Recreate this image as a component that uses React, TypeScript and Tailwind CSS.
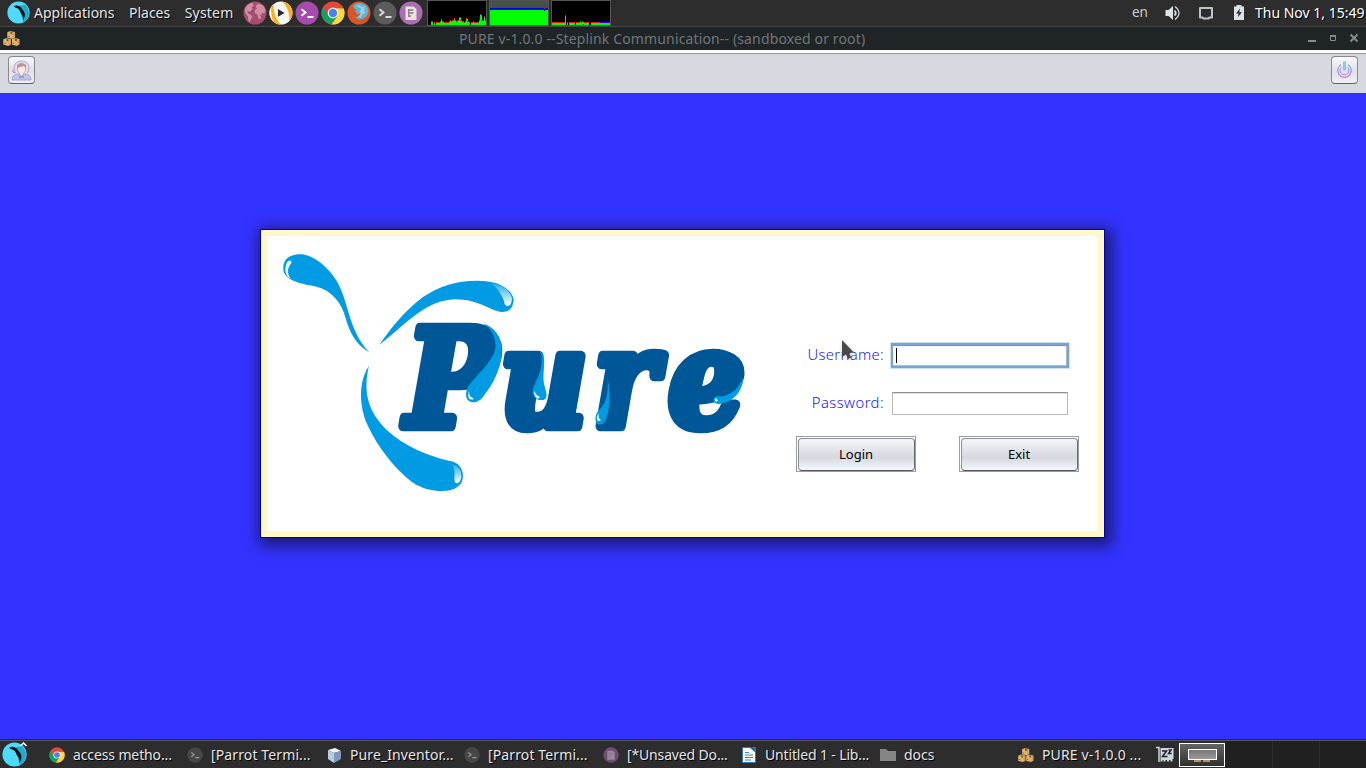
import type { ReactNode } from "react";

const ui = "font-['Noto_Sans',sans-serif]";

function Chrome({ size }: { size: number }) {
  return (
    <svg width={size} height={size} viewBox="0 0 24 24" className="shrink-0">
      <circle cx="12" cy="12" r="11.5" fill="#e0483e" />
      <path d="M2 6.3A11.5 11.5 0 0 0 10.5 23.4L16.5 14.5L12 12L6.8 14.3Z" fill="#12a35f" />
      <path d="M10.5 23.4A11.5 11.5 0 0 0 22.6 7.5L12 7.2L17 14.4Z" fill="#ffd83f" />
      <circle cx="12" cy="12" r="5.4" fill="#f3f3f3" />
      <circle cx="12" cy="12" r="4.2" fill="#4684ec" />
    </svg>
  );
}

function Terminal({ size, bg, fg }: { size: number; bg: string; fg: string }) {
  return (
    <svg width={size} height={size} viewBox="0 0 24 24" className="shrink-0">
      <circle cx="12" cy="12" r="11.5" fill={bg} />
      <path d="M6.5 8.2L10.5 11.5L6.5 14.8M12.5 16H18.5" fill="none" stroke={fg} strokeWidth="1.9" />
    </svg>
  );
}

function Parrot({ size }: { size: number }) {
  return (
    <svg width={size} height={size} viewBox="0 0 24 24" className="shrink-0">
      <circle cx="12" cy="12" r="11.6" fill="#4fd9fb" />
      <path d="M13 5L19 3.8A11.6 11.6 0 0 1 17 22.5Z" fill="#24a9cc" />
      <path d="M7 5.6C10 3.6 13.6 5 15.4 8C17.2 10 19.2 12.6 18.6 15.2C18.6 17 17.6 17.8 16.8 20.5C16.9 17.6 16.6 16.4 15.6 14.4C13.6 12.6 14 10.4 11.8 8.2C10.4 7 8.7 7.6 7 5.6Z" fill="#0b1115" />
    </svg>
  );
}

function Doc({ size, bg, fg }: { size: number; bg: string; fg: string }) {
  return (
    <svg width={size} height={size} viewBox="0 0 24 24" className="shrink-0">
      <circle cx="12" cy="12" r="11.5" fill={bg} />
      <path d="M6.5 5.5H14.5L17.5 8V19H6.5Z" fill={fg} />
      <path d="M9 9H14.5M9 12H14.5M9 15H12" stroke="#8b7a80" strokeWidth="1.6" />
      <path d="M9.7 8.5V16" stroke="#8b7a80" strokeWidth="1.2" />
    </svg>
  );
}

function Globe() {
  return (
    <svg width="24" height="24" viewBox="0 0 24 24" className="shrink-0">
      <circle cx="12" cy="12" r="11.5" fill="#a44d70" />
      <path d="M1.8 8C3.5 4.5 6 2.2 9.5 2L10.8 4L8.7 6.5L9.5 8.5L6.5 10.8L4.5 10L5 12.5L8 14L9.5 16L7.5 18.5L7 21.5L5.2 19L5 15.5L2.6 12.4ZM12.5 5.2L15.5 2.5L20.5 5L22.5 9L21.3 13L19.5 11.5L18 14.5L16.5 11.5L18.2 17L15.8 18.5L14.5 13.5L12 12.4L11.7 9L14 7.5Z" fill="#cf8fa3" />
    </svg>
  );
}

function Player() {
  return (
    <svg width="24" height="24" viewBox="0 0 24 24" className="shrink-0">
      <circle cx="12" cy="12" r="11.5" fill="#f5f5f4" />
      <path d="M4.6 3.2A11.5 11.5 0 0 0 11.5 23.5C7 18 4.2 11 4.6 3.2Z" fill="#ffad18" />
      <path d="M13 .6A11.5 11.5 0 0 1 20.6 19.6C20.5 12 18 5 13 .6Z" fill="#ffad18" />
      <path d="M2.2 6A11.5 11.5 0 0 0 4.6 20.8C2.6 16 1.8 11 2.2 6Z" fill="#f5f5f4" />
      <path d="M9 8L15.5 11.9L9 15.7Z" fill="#282828" />
    </svg>
  );
}

function Firefox() {
  return (
    <svg width="24" height="24" viewBox="0 0 24 24" className="shrink-0">
      <circle cx="12" cy="12" r="11.5" fill="#dc5529" />
      <path d="M6 4.5C10 .8 17 1.3 20.2 5.5C22.5 9 21.4 14 18.2 16.5C14.6 19.2 10 18.7 8 16.3L12 15.4L14.2 12.8L10.5 13L8 10.5L9 8.3L7 7.5Z" fill="#5fb2d4" />
      <path d="M9 5L12.5 4L15.5 6L18.5 5.2L17 9L18.7 12L15.5 13.2L13.5 17L11 16L14 12L12 10.5L14.5 8Z" fill="#9edbe9" opacity=".8" />
    </svg>
  );
}

function Boxes({ size }: { size: number }) {
  return (
    <svg width={size} height={size} viewBox="0 0 17 17" className="shrink-0">
      {["translate(4.5 1)", "translate(.5 8)", "translate(9 8)"].map((t) => (
        <g key={t} transform={t}>
          <path d="M0 1.3L2.5 0L7.5 1V6.5L5.3 7.8L0 6.8Z" fill="#d2a45c" />
          <path d="M0 1.3L5.3 2.2V7.8L0 6.8Z" fill="#e0b76e" />
          <path d="M3 .7L4.8 1.2V3.4L3 3.1Z" fill="#775a32" />
          <path d="M.7 5.2L2.2 5.5" stroke="#765c38" strokeWidth=".9" />
        </g>
      ))}
    </svg>
  );
}

const cpu = [0,0,0,2,0,1,0,1,1,1,2,4,2,2,1,1,1,1,2,3,2,3,5,3,2,3,3,6,3,2,2,1,2,5,2,1,0,1,1,2,1,1,1,1,3,9,3,3,7,3];
const net = [1,1,1,1,1,1,1,1,1,1,1,8,0,1,0,1,1,1,1,1,0,1,1,1,2,1,2,0,1,1,1,1,0,0,1,1,1,1,1,1,1,1,1,1,1,1,1,1,1,1];

function Graph({ data, spike }: { data: number[]; spike: string }) {
  return (
    <svg width="60" height="26" viewBox="0 0 60 26" shapeRendering="crispEdges" className="shrink-0">
      <rect x=".5" y=".5" width="59" height="25" fill="#000" stroke="#555" />
      {data.map((v, i) => (
        <g key={i}>
          <rect x={1 + i * 1.16} y={24 - v} width="1.4" height={v + 1} fill={v > 0 ? "#0f0" : "#000"} />
          {v > 0 && <rect x={1 + i * 1.16} y={23 - v} width="1.2" height="1" fill={i > 40 ? spike : "#e61616"} />}
        </g>
      ))}
    </svg>
  );
}

function Task({ width, children, label, tracking = "" }: { width: string; children: ReactNode; label: string; tracking?: string }) {
  return (
    <div className={`flex shrink-0 items-center gap-[8px] whitespace-nowrap ${width}`}>
      {children}
      <span className={`[text-shadow:1px_1px_0_#000] ${tracking}`}>{label}</span>
    </div>
  );
}

function TopPanel() {
  return (
    <header className="flex h-[27px] items-center border-b border-[#484848] bg-[#2d2d2d] pb-px pl-[7px] text-[14px] text-[#e6e6e6]">
      <Parrot size={23} />
      <nav className="ml-[4px] flex w-[209px] gap-[14.5px] [text-shadow:1px_1px_0_#000]">
        <span>Applications</span>
        <span>Places</span>
        <span className="tracking-[0.2px]">System</span>
      </nav>
      <div className="flex gap-[2px]">
        <Globe />
        <Player />
        <Terminal size={24} bg="#a64bad" fg="#fff" />
        <Chrome size={24} />
        <Firefox />
        <Terminal size={24} bg="#5b5b5b" fg="#ddd" />
        <Doc size={24} bg="#a96fb2" fg="#e9e3dc" />
      </div>
      <div className="ml-[4px] flex gap-[2px]">
        <Graph data={cpu} spike="#775555" />
        <svg width="60" height="26" viewBox="0 0 60 26" shapeRendering="crispEdges">
          <rect x=".5" y=".5" width="59" height="25" fill="#465149" stroke="#555" />
          <path d="M1 7.5H59" stroke="#c01818" />
          <path d="M1 9H59" stroke="#00f" strokeWidth="2" />
          <path d="M1 10H59V25H1Z" fill="#0f0" />
          <path d="M55.5 8V11" stroke="#00f" />
          <path d="M55.5 7V9" stroke="#c01818" />
        </svg>
        <Graph data={net} spike="#2800ff" />
      </div>
      <div className="ml-auto flex items-center">
        <span className="w-[33px] text-[13.5px] text-[#c9cdd2]">en</span>
        <svg width="16" height="16" viewBox="0 0 16 16" className="mr-[17px]">
          <path d="M.5 5H3.5L8 1V15L3.5 11H.5Z" fill="#dce1ea" />
          <path d="M9.5 5.5Q12 8 9.5 10.5" fill="none" stroke="#dce1ea" strokeWidth="1.7" />
          <path d="M10 1.5Q18 8 10 14.5" fill="none" stroke="#dce1ea" strokeWidth="1.2" />
        </svg>
        <svg width="16" height="16" viewBox="0 0 16 16" className="mr-[20px]">
          <path d="M2 3H14V12.5H11.5L10.5 13.5H5.5L4.5 12.5H2Z" fill="none" stroke="#bfc3ca" strokeWidth="2" strokeLinejoin="round" />
        </svg>
        <svg width="10" height="15" viewBox="0 0 10 15" className="mr-[11px]">
          <path d="M0 1.5H2.5V0H7.5V1.5H10V15H0Z" fill="#dce1ea" />
          <path d="M6 3.5L2 8.5H4.5L4 12L8 7.3H5.3Z" fill="#2d2d2d" />
        </svg>
        <span className="w-[111px] whitespace-nowrap text-white [text-shadow:1px_1px_0_#000]">Thu Nov 1, 15:49</span>
      </div>
    </header>
  );
}

function TitleBar() {
  return (
    <div className="grid h-[23px] grid-cols-[459px_1fr_58px] items-center bg-[#1f2427]">
      <div className="pl-[3px]"><Boxes size={17} /></div>
      <h1 className="whitespace-nowrap text-[14px] leading-[23px] tracking-[0.14px] text-[#70777a]">PURE v-1.0.0 --Steplink Communication-- (sandboxed or root)</h1>
      <svg width="58" height="23" viewBox="0 0 58 23" fill="none" stroke="#858b8a">
        <path d="M0 14H8" strokeWidth="2" />
        <path d="M22.5 8.5H27.5V13.5H22.5Z" />
        <path d="M22 9H28" strokeWidth="2" />
        <path d="M42.5 7.5L49.5 14.5M49.5 7.5L42.5 14.5" strokeWidth="2" />
      </svg>
    </div>
  );
}

function ToolButton({ children }: { children: ReactNode }) {
  return (
    <button className="flex h-[28px] w-[27px] items-center justify-center rounded-[4px] border border-[#85888e] border-b-[#5d6066] bg-linear-to-b from-[#fafafc] via-[#dfe1e6] to-[#eef0f6]">
      {children}
    </button>
  );
}

function Toolbar() {
  return (
    <div className="flex h-[43px] items-start justify-between border-t-[3px] border-[#fbfbfc] bg-[#d6d9e0] pr-[8px] pl-[8px] shadow-[inset_0_1px_0_#9498a0]">
      <div className="pt-[3px]">
        <ToolButton>
          <svg width="21" height="21" viewBox="0 0 21 21">
            <path d="M4.5 13C.8 6 4.8 1 10.5 1S20 6 16.5 13" fill="#e4deed" stroke="#b8a0c8" />
            <path d="M1 20Q1 14.5 7 14L10.5 16L14 14Q20 14.5 20 20Z" fill="#bcc7e8" stroke="#a4a7d4" />
            <path d="M6.5 7Q7 4 10.5 4T14.5 7V10.5L12.2 14V15L10.5 16L8.8 15V14L6.5 10.5Z" fill="#f9e9df" stroke="#bc8fae" strokeWidth=".7" />
            <path d="M6 8V5Q10.5 1 15 5V8L12.5 6Q9 7 6 8Z" fill="#bd919f" />
            <path d="M8 17H13" stroke="#8796c0" strokeWidth="1.5" />
            <path d="M2 10V12L4 13" stroke="#a38ab9" fill="none" />
          </svg>
        </ToolButton>
      </div>
      <div className="pt-[3px]">
        <ToolButton>
          <svg width="17" height="18" viewBox="0 0 17 18" fill="none">
            <defs>
              <linearGradient id="power" x1="0" y1="0" x2="0" y2="18" gradientUnits="userSpaceOnUse">
                <stop stopColor="#62b9fa" /><stop offset="1" stopColor="#cb6ceb" />
              </linearGradient>
            </defs>
            <path d="M5 3.7A6.8 6.8 0 1 0 12 3.7" stroke="url(#power)" strokeWidth="1.2" />
            <path d="M5.5 6A4.5 4.5 0 1 0 11.5 6" stroke="url(#power)" />
            <path d="M7.5 1H9.5V9H7.5Z" fill="#96c9fb" stroke="#79b9f7" strokeWidth=".8" />
          </svg>
        </ToolButton>
      </div>
    </div>
  );
}

function PureLogo() {
  return (
    <svg width="500" height="295" viewBox="267 236 500 295" className="shrink-0">
      <defs>
        <linearGradient id="shine" x1="0" y1="0" x2="0" y2="1">
          <stop stopColor="#fff" stopOpacity=".15" /><stop offset="1" stopColor="#fff" />
        </linearGradient>
      </defs>
      <g fill="#009be3">
        <path d="M369.3 352.3C352 342 348 326 344 313C338 297 327 288 311 285.5C296 283 283 278 283.3 268.7C283 259 290 254.3 300 254.3C314 254 331 270 338.3 283.7C349 304 349 331 369.3 352.3Z" />
        <path d="M379.3 345C388 332 403 312 423 297C440 286 456 280.7 477 280.7C497 280.7 510 287 513.7 299C513.5 308 509 312 502 312C490 311 479 299.3 455 299.3C425 300 404 326 379.3 345Z" />
        <path d="M369 365.7C358 382 359 407 368 426C377 446 394 468 412 482C422 489 433 491 442 491C455 491 463 485 463 476C463 468 458 462 450 461C428 456 404 446 386.7 430C370 413 362 395 369 365.7Z" />
      </g>
      <path d="M288 261C284 266 284 276 291 279C286 273 288 267 291.5 263C292 260 289 260 288 261Z" fill="#eaf8ff" />
      <path d="M491 283Q508 286 512 298Q512 306 507 306Q504 305 504 301Q500 290 491 283Z" fill="url(#shine)" />
      <path d="M452 464Q462 467 461.5 477Q460 484 456 483Q454 482 454.5 476Q455 469 452 464Z" fill="url(#shine)" />
      <g transform="translate(400 0) scale(.9 1)" stroke="#005797" strokeLinejoin="round">
        <text
          x="6.5 111 215 298"
          y="426"
          fontFamily="'DejaVu Serif'"
          fontWeight="700"
          fontStyle="italic"
          fontSize="134"
          fill="#005797"
          strokeWidth="10.5"
        >
          Pure
        </text>
      </g>
      <g fill="#009be3">
        <path d="M483 323.5C496 327 503 340 501.7 353C501 369 492 386 485 394C480 402 475 403 471 402C465 400 465 393 468 387C476 375 493 362 495.5 348C496 337 491 328 483 323.5Z" />
        <path d="M540 351.7C546 354 544 366 543.5 376C543 386 547 390 546.5 396C546 400 543 400.5 539 400C534 398 531.5 394 533 389C535 382 540 375 541.5 365Q542.5 356 540 351.7Z" />
        <path d="M607.7 379C611 393 610 409 606 419C604 425 599 426 596.5 423C594 419 596 412 600 409C607 402 608 393 607.7 379Z" />
        <path d="M743 378C743 391 733 403 718.3 404C714 404 712.5 400 714.5 397.5C716 395 720 397 724 396C734 393 738 388 743 378Z" />
      </g>
      <path d="M469 391C467 397 469 401 474 399C471 397 469 396 469 391ZM534 391C534 397 538 401 540 397C537 396 536 394 534 391ZM599 413C595 418 597 423 601 420C599 419 598 417 599 413ZM715 398C714 402 717 403 718 400Z" fill="#e9faff" />
    </svg>
  );
}

function FormButton({ children }: { children: ReactNode }) {
  return (
    <div className="h-[36px] w-[120px] border border-[#999ca1] pt-px pl-px">
      <button className="h-full w-full rounded-[4px] border border-[#8c8f95] border-b-[#555960] border-r-[#676a70] bg-linear-to-b from-[#f3f3f6] from-5% via-[#d5d8df] via-60% to-[#f5f7ff] pt-px pr-px text-[13px] text-black">
        {children}
      </button>
    </div>
  );
}

function LoginForm() {
  return (
    <form className="ml-[29px] w-[283px] pt-[107px]">
      <div className="flex h-[25px] items-center justify-end pr-[10px]">
        <label className="mr-[7px] pb-[2px] text-[14.8px] font-light tracking-[0.35px] text-[#1616ff]">Username:</label>
        <div className="flex h-[25px] w-[178px] items-center border-2 border-[#78a5d0] bg-white pl-[3px] shadow-[0_0_0_1px_#cfe0ef,inset_0_1px_1px_#888,inset_-1px_-1px_0_#bbb]">
          <span className="h-[15px] w-px bg-black" />
        </div>
      </div>
      <div className="mt-[24px] flex h-[23px] items-center justify-end pr-[11px]">
        <label className="mr-[8px] pb-[2px] text-[14.8px] font-light tracking-[0.45px] text-[#1616ff]">Password:</label>
        <div className="h-[23px] w-[176px] border border-[#b8b8b8] border-t-[#8e8e8e] bg-white shadow-[inset_0_1px_0_#ddd]" />
      </div>
      <div className="mt-[21px] flex justify-between">
        <FormButton>Login</FormButton>
        <FormButton>Exit</FormButton>
      </div>
    </form>
  );
}

function Taskbar() {
  return (
    <footer className="flex h-[28px] items-center overflow-hidden border-t border-[#575757] bg-[#2d2d2d] pl-[2px] text-[14px] text-[#e6e6e6] shadow-[0_-1px_0_#252552]">
      <div className="relative w-[47px]">
        <Parrot size={25} />
        <svg width="7" height="5" className="absolute top-0 left-[18px]"><path d="M.5 4L3.5 1L6.5 4" fill="none" stroke="#fff" strokeWidth="1.5" /></svg>
      </div>
      <Task width="w-[138px]" tracking="tracking-[-0.12px]" label="access metho..."><Chrome size={16} /></Task>
      <Task width="w-[139px]" tracking="tracking-[0.12px]" label="[Parrot Termi..."><Terminal size={16} bg="#474747" fg="#999" /></Task>
      <Task width="w-[138px]" tracking="tracking-[0.1px]" label="Pure_Inventor...">
        <svg width="16" height="16" viewBox="0 0 16 16"><path d="M2 3L9 1L15 4L8 6Z" fill="#eef4fb" /><path d="M2 3L8 6V16L2 12Z" fill="#b8cce4" /><path d="M8 6L15 4V12L8 16Z" fill="#8098bc" /></svg>
      </Task>
      <Task width="w-[139px]" tracking="tracking-[0.12px]" label="[Parrot Termi..."><Terminal size={16} bg="#474747" fg="#999" /></Task>
      <Task width="w-[138px]" tracking="tracking-[-0.15px]" label="[*Unsaved Do..."><Doc size={16} bg="#704c78" fg="#968c98" /></Task>
      <Task width="w-[139px]" tracking="tracking-[-0.15px]" label="Untitled 1 - Lib...">
        <svg width="16" height="16" viewBox="0 0 16 16"><path d="M1.5 .5H9L14.5 5V15.5H1.5Z" fill="#fff" stroke="#2a78b5" /><path d="M10 0H15V5Z" fill="#2475b8" /><path d="M4 5.5H8M4 8H12M4 10.5H12M4 13H10" stroke="#3c80b8" /></svg>
      </Task>
      <Task width="w-[138px]" label="docs">
        <svg width="16" height="16" viewBox="0 0 16 16"><path d="M0 2H6L8 4H16V14H0Z" fill="#858585" /></svg>
      </Task>
      <Task width="w-[138px]" tracking="tracking-[0.15px]" label="PURE v-1.0.0 ..."><Boxes size={16} /></Task>
      <svg width="18" height="17" viewBox="0 0 18 17" className="mr-[5px] shrink-0" fill="none">
        <path d="M0 1.5H3V16" stroke="#d0d5de" strokeWidth="1.5" />
        <path d="M4.5 2H17.5V13H16.5V15.5H14.5V14H13V15.5H11V14H9.5V15.5H7.5V14H6.5V15.5H4.5Z" fill="#d0d5de" />
        <path d="M6 5H10.5L6.5 10.5H11.5M12.5 4H15L12.5 7.5H15.5" stroke="#20242a" strokeWidth="1.5" />
      </svg>
      <div className="flex h-full flex-1">
        <div className="mt-[2px] flex h-[24px] w-[46px] items-center justify-center border border-white bg-linear-to-b from-[#656565] to-[#303030]">
          <div className="flex flex-col items-center">
            <div className="h-[11px] w-[29px] border border-white bg-linear-to-b from-[#777] to-[#999]" />
            <div className="flex gap-[2px]">
              <span className="h-[2px] w-[7px] bg-[#b8925a]" />
              <span className="h-[2px] w-[7px] bg-[#b8925a]" />
            </div>
          </div>
        </div>
        <div className="w-[48px] border-r border-[#303030] bg-[#202020]" />
        <div className="w-[47px] border-r border-[#303030] bg-[#202020]" />
        <div className="flex-1 bg-[#202020]" />
      </div>
    </footer>
  );
}

export default function App() {
  return (
    <div className={`relative flex h-[768px] w-[1366px] flex-col overflow-hidden ${ui}`}>
      <TopPanel />
      <TitleBar />
      <Toolbar />
      <main className="flex-1 bg-[#3333ff] pt-[137px] pl-[261px]">
        <section className="flex h-[307px] w-[843px] border-[6px] border-[#fff8c7] bg-white shadow-[0_0_0_1px_#0000a8,3px_4px_14px_5px_#1b1b78]">
          <PureLogo />
          <LoginForm />
        </section>
      </main>
      <Taskbar />
      <svg width="14" height="21" viewBox="0 0 14 21" className="absolute top-[339px] left-[841px] drop-shadow-sm">
        <path d="M1 1V18L5 15.5L7 20L10 18.5L8.5 14.5L12.5 13Z" fill="#4a4a4a" />
      </svg>
    </div>
  );
}
